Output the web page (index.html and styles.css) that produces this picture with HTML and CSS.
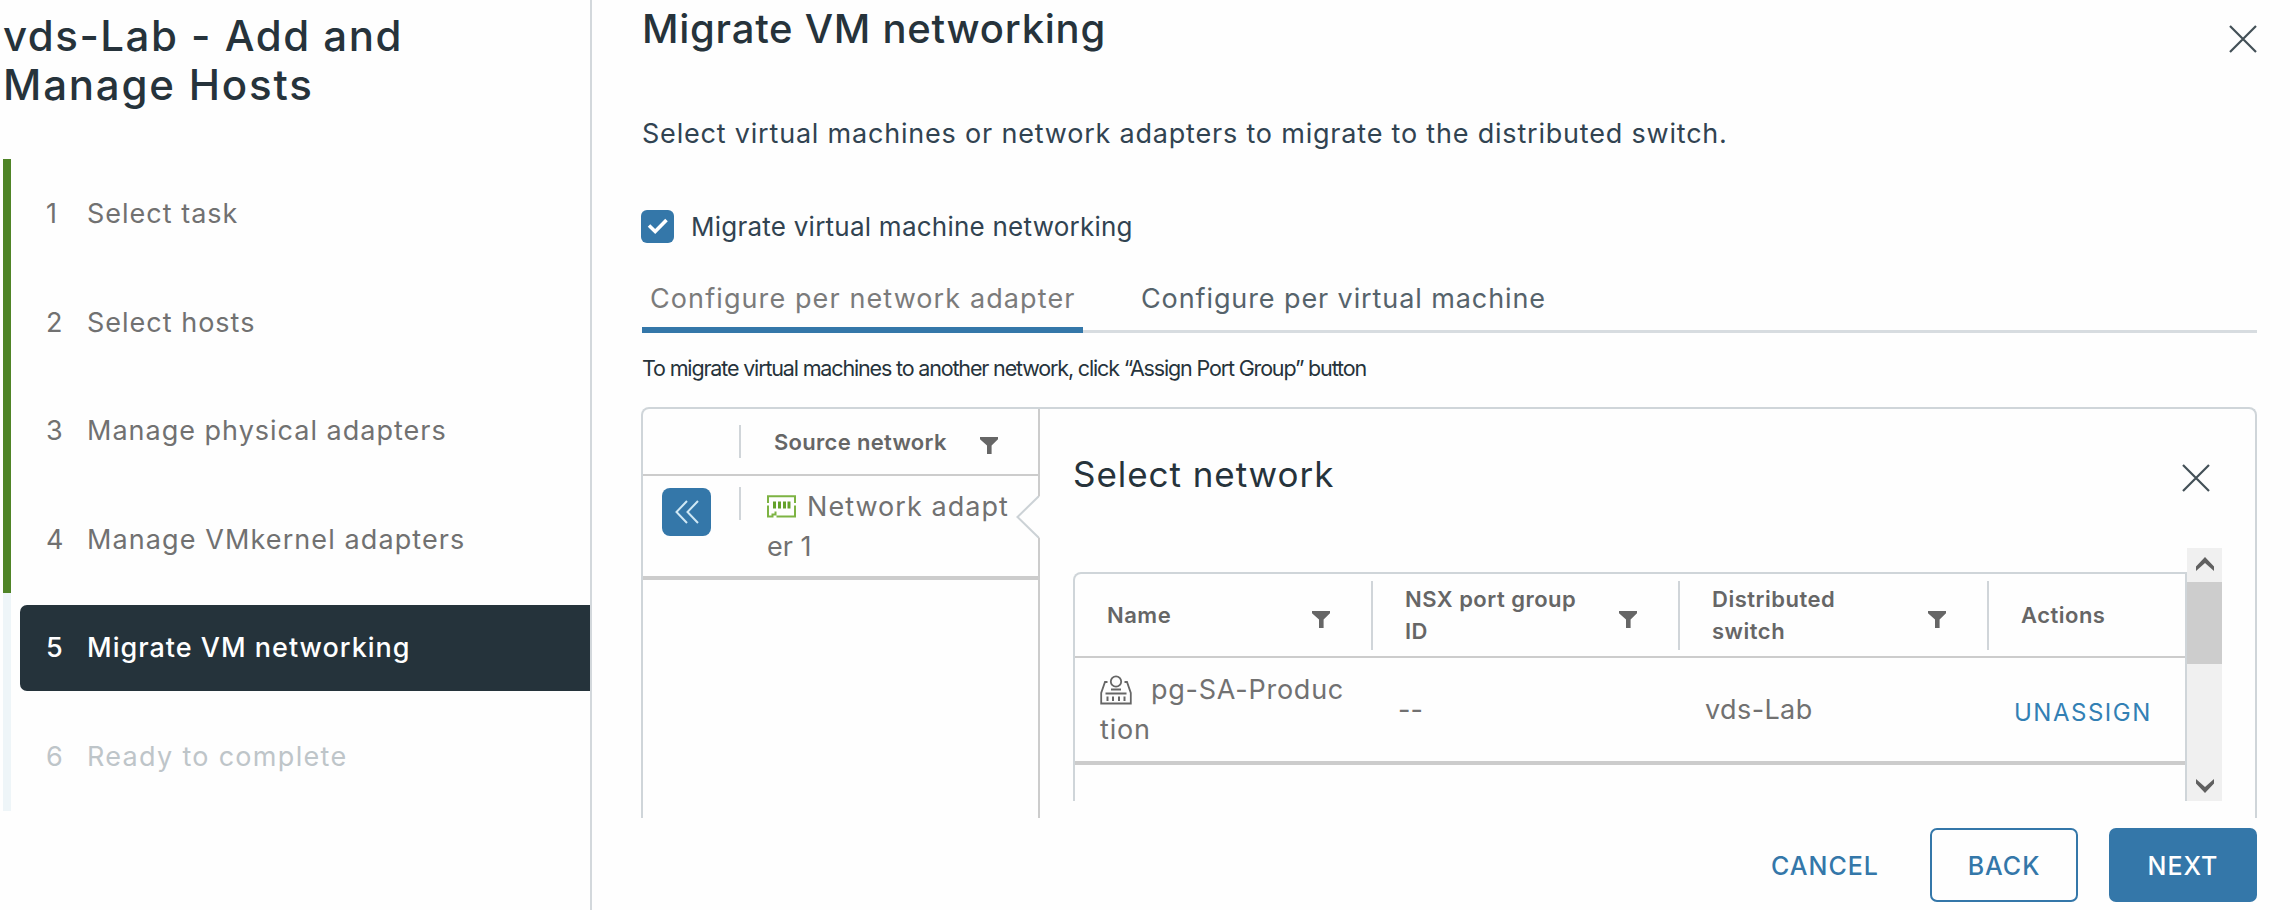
FILE: index.html
```
<!DOCTYPE html>
<html lang="en">
<head>
<meta charset="utf-8">
<title>vds-Lab - Add and Manage Hosts</title>
<link rel="stylesheet" href="styles.css">
</head>
<body>
<svg class="defs" aria-hidden="true">
  <symbol id="filter" viewBox="0 0 18 17"><path d="M0 0h18v2.200L11.600 8.600V17H7V8.600L0 2.200z" fill="#666"/></symbol>
  <symbol id="close" viewBox="0 0 28 28"><path d="M1 1 27 27M27 1 1 27" fill="none" stroke="#435057" stroke-width="2.200"/></symbol>
</svg>
<div class="wizard">
  <aside class="sidebar">
    <h1 class="wizard-title"><span class="line t1">vds-Lab - Add and</span><span class="line t2">Manage Hosts</span></h1>
    <ol class="steps">
      <li class="step done"><span class="num">1</span><span class="label s1">Select task</span></li>
      <li class="step done"><span class="num">2</span><span class="label s2">Select hosts</span></li>
      <li class="step done"><span class="num">3</span><span class="label s3">Manage physical adapters</span></li>
      <li class="step done"><span class="num">4</span><span class="label s4">Manage VMkernel adapters</span></li>
      <li class="step active"><span class="num">5</span><span class="label s5">Migrate VM networking</span></li>
      <li class="step todo"><span class="num">6</span><span class="label s6">Ready to complete</span></li>
    </ol>
  </aside>
  <main class="content">
    <header class="page-head">
      <h2 class="page-title">Migrate VM networking</h2>
      <svg class="close page-close"><use href="#close"/></svg>
    </header>
    <p class="desc">Select virtual machines or network adapters to migrate to the distributed switch.</p>
    <label class="check">
      <span class="box"><svg viewBox="0 0 33 33"><path d="M8 15.500l6.200 6L25.500 10" fill="none" stroke="#fff" stroke-width="3.600"/></svg></span>
      <span class="check-label">Migrate virtual machine networking</span>
    </label>
    <nav class="tabs">
      <span class="tab current">Configure per network adapter</span>
      <span class="tab other">Configure per virtual machine</span>
    </nav>
    <p class="hint">To migrate virtual machines to another network, click “Assign Port Group” button</p>
    <section class="grid">
      <div class="adapters">
        <div class="a-head"><i class="sep"></i><span class="th src">Source network</span><svg class="filter"><use href="#filter"/></svg></div>
        <div class="a-row">
          <span class="collapse"><svg viewBox="0 0 24 24"><path d="M12 1 1.500 12 12 23M23 1 12.500 12 23 23" fill="none" stroke="#cfe8f5" stroke-width="2"/></svg></span>
          <i class="sep"></i>
          <div class="adapter">
            <div class="adapter-line"><svg class="nic" viewBox="0 0 29 23" fill="none" stroke="#7db343" stroke-width="2"><path d="M1 8V1.300H28V8M28 10.500v11H9.500M1 10.500v11H5.500V19.500H8.500v-3"/><path d="M7.500 6.500v7M12.500 6.500v7M17.500 6.500v7M22 6.500v7" stroke="#64a22b" stroke-width="3"/></svg><span class="cell na">Network adapt</span></div>
            <div class="cell er">er 1</div>
          </div>
        </div>
        <svg class="notch" viewBox="0 0 24 44"><path d="M24 1 1.500 22 24 43z" fill="#fefefe"/><path d="M22.500 1.500 1.500 22 22.500 42.500" fill="none" stroke="#ccd2d6" stroke-width="2"/></svg>
      </div>
      <div class="picker">
        <header class="picker-head">
          <h3 class="picker-title">Select network</h3>
          <svg class="close"><use href="#close"/></svg>
        </header>
        <div class="scroller">
          <div class="table">
            <div class="row head">
              <div class="col c1"><span class="th name">Name</span><svg class="filter"><use href="#filter"/></svg></div>
              <div class="col c2"><span class="th nsx">NSX port group<br>ID</span><svg class="filter"><use href="#filter"/></svg></div>
              <div class="col c3"><span class="th dist">Distributed<br>switch</span><svg class="filter"><use href="#filter"/></svg></div>
              <div class="col c4"><span class="th act">Actions</span></div>
            </div>
            <div class="row data">
              <div class="col c1 stacked">
                <div class="pg-line"><svg class="pg" viewBox="0 0 32 30" fill="none" stroke="#666" stroke-width="1.800"><circle cx="16" cy="6.500" r="5.200"/><path d="M7.500 7H5L1.200 18V28.500H30.800V18L27 7H24.500M11 14.500H21M5.500 18.500H26.500M1.200 28.300H30.800"/><path d="M7.500 21.500v4.500M13 21.500v4.500M19 21.500v4.500M24.500 21.500v4.500" stroke-width="2"/></svg><span class="cell pgname">pg-SA-Produc</span></div>
                <div class="cell tion">tion</div>
              </div>
              <div class="col c2"><span class="cell dash">--</span></div>
              <div class="col c3"><span class="cell vds">vds-Lab</span></div>
              <div class="col c4"><a class="unassign">UNASSIGN</a></div>
            </div>
          </div>
          <div class="scrollbar">
            <svg class="arrow" viewBox="0 0 18 15"><path d="M0 14V9.500L9 0l9 9.500V14L9 6z" fill="#606060"/></svg>
            <span class="thumb"></span>
            <svg class="arrow down" viewBox="0 0 18 15"><path d="M0 1v4.500L9 15l9-9.500V1L9 9z" fill="#606060"/></svg>
          </div>
        </div>
      </div>
    </section>
    <footer class="actions">
      <a class="btn cancel">CANCEL</a>
      <a class="btn back">BACK</a>
      <a class="btn next">NEXT</a>
    </footer>
  </main>
</div>
</body>
</html>
```
FILE: styles.css
```
* { box-sizing: border-box; }
body { margin: 0; background: #fefefe; font-family: Inter, "Liberation Sans", sans-serif; color: #314351; }
h1, h2, h3, p, ol { margin: 0; padding: 0; font-weight: 500; list-style: none; }
svg { display: block; flex: none; }
.defs { position: absolute; width: 0; height: 0; }
.wizard { display: flex; width: 2290px; height: 910px; overflow: hidden; white-space: nowrap; }

.sidebar { width: 592px; flex: none; border-right: 2px solid #d3d8dc; padding: 11px 0 0 3px; }
.wizard-title { height: 148px; font-size: 42px; line-height: 49px; color: #26333b; }
.line { display: block; }
.t1 { letter-spacing: 1.5px; }
.t2 { letter-spacing: 1.8px; }
.steps { font-weight: 400; }
.step { height: 108.600px; display: flex; align-items: center; border-left: 8px solid #4f8427; padding: 1px 0 0 9px; font-size: 27px; color: #717171; }
.step .num { width: 59px; padding-left: 26px; }
.step.active, .step.todo { border-color: #eef5f8; }
.step.active .num { height: 86px; line-height: 86px; background: #25333b; border-radius: 7px 0 0 7px; width: 68px; color: #fff; font-weight: 500; }
.step.active .label { height: 86px; line-height: 86px; background: #25333b; flex: 1; color: #fff; font-weight: 500; }
.step .label { padding-left: 8px; letter-spacing: 1px; }
.step.active .label { padding-left: 0; text-indent: -1px; }
.step .s4 { letter-spacing: 1.1px; }
.step .s6 { letter-spacing: 1.3px; }
.step.todo { color: #bec5c9; }

.content { flex: 1; padding: 0 33px 0 50px; }
.page-head { height: 76px; display: flex; justify-content: space-between; align-items: flex-start; }
.page-title { font-size: 40px; line-height: 57px; letter-spacing: .75px; color: #26333b; }
.close { width: 28px; height: 28px; }
.page-close { margin-top: 25px; }
.desc { height: 114px; padding-top: 39px; font-size: 27px; line-height: 38px; font-weight: 400; letter-spacing: .8px; }
.check { height: 72px; display: flex; align-items: center; gap: 17px; margin-left: -1px; font-size: 26px; letter-spacing: .24px; }
.box { width: 33px; height: 33px; border-radius: 6px; background: #3477a9; }
.box svg { width: 33px; height: 33px; }
.tabs { height: 71px; display: flex; align-items: stretch; gap: 50px; border-bottom: 3px solid #d7dce0; font-size: 27px; }
.tab { height: 71px; line-height: 74px; padding: 0 8px; }
.tab.current { width: 441px; color: #7b7b7b; border-bottom: 6px solid #3477a9; letter-spacing: 1.1px; }
.tab.other { color: #56636b; letter-spacing: .9px; }
.hint { height: 74px; line-height: 70px; font-size: 21.500px; font-weight: 400; letter-spacing: -1.16px; color: #26333b; }

.grid { display: flex; height: 411px; margin-left: -1px; border: 2px solid #cfd5d9; border-bottom: 0; border-radius: 8px 8px 0 0; }
.adapters { position: relative; width: 397px; border-right: 2px solid #ccc; }
.a-head { display: flex; align-items: center; height: 67px; border-bottom: 2px solid #ccc; padding-left: 96px; }
.sep { width: 2px; height: 33px; background: #d0d5d9; flex: none; }
.th { font-size: 22px; line-height: 32px; font-weight: 600; color: #666; letter-spacing: .5px; }
.src { margin-left: 33px; width: 206px; letter-spacing: .3px; }
.filter { width: 18px; height: 17px; position: relative; top: 4px; }
.a-row { display: flex; align-items: flex-start; height: 104px; border-bottom: 4px solid #ccc; padding: 11px 0 0 19px; }
.a-row .sep { margin: 0 26px 0 28px; }
.collapse { width: 49px; height: 48px; margin-top: 1px; border-radius: 8px; background: #3477a9; display: grid; place-items: center; }
.collapse svg { width: 24px; height: 24px; }
.cell { font-size: 27px; line-height: 40px; color: #717171; }
.na { letter-spacing: 1.05px; }
.adapter-line { display: flex; align-items: center; gap: 11px; }
.nic { width: 29px; height: 23px; margin-bottom: 2px; }
.notch { position: absolute; right: -2px; top: 86px; width: 24px; height: 44px; }

.picker { flex: 1; padding: 36px 33px 0 33px; }
.picker-head { display: flex; justify-content: space-between; align-items: center; height: 103px; padding: 0 12px 38px 0; }
.picker-title { font-size: 35px; font-weight: 400; letter-spacing: .95px; line-height: 40px; padding-bottom: 8px; color: #26333b; }
.scroller { display: flex; height: 253px; }
.table { flex: 1; margin-top: 24px; border: 2px solid #cfd5d9; border-bottom: 0; border-radius: 8px 0 0 0; overflow: hidden; }
.row { display: grid; grid-template-columns: 298px 307px 309px 1fr; }
.head { height: 84px; border-bottom: 2px solid #ccc; align-items: center; }
.head .col { display: flex; align-items: center; justify-content: space-between; height: 69px; padding: 0 41px 0 32px; border-right: 2px solid #d0d5d9; }
.head .c4 { border: 0; }
.data { height: 107px; border-bottom: 4px solid #ccc; align-items: center; }
.data .col { padding-left: 25px; }
.pg-line { display: flex; align-items: center; gap: 19px; }
.pg { width: 32px; height: 30px; }
.pgname { letter-spacing: .75px; }
.tion { letter-spacing: .8px; }
.vds { letter-spacing: .4px; }
.unassign { display: block; padding-top: 5px; font-size: 24px; color: #3280b4; letter-spacing: 1.5px; }
.scrollbar { width: 35px; background: #f0f0f0; display: flex; flex-direction: column; align-items: center; padding-top: 9px; }
.arrow { width: 18px; height: 15px; }
.thumb { width: 35px; height: 82px; margin-top: 10px; background: #cdcdcd; }
.down { margin-top: auto; margin-bottom: 8px; }

.actions { display: flex; justify-content: flex-end; gap: 31px; padding-top: 10px; }
.btn { height: 74px; width: 148px; line-height: 76px; text-align: center; border-radius: 7px; font-size: 25px; font-weight: 500; color: #3477a9; letter-spacing: 1px; }
.back { border: 2px solid #3477a9; line-height: 72px; }
.next { background: #3477a9; color: #fff; }
```
